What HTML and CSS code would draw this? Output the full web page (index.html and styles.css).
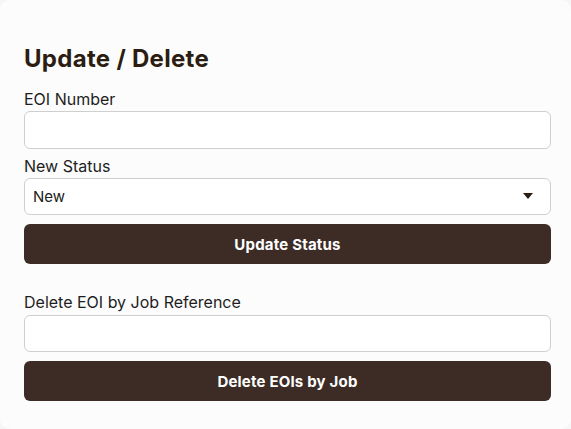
FILE: index.html
```html
<!DOCTYPE html>
<html lang="en">
<head>
<meta charset="utf-8">
<title>Update / Delete</title>
<link rel="stylesheet" href="styles.css">
</head>
<body>
<section class="card">
  <h2 class="title">Update / Delete</h2>
  <form class="form">
    <label class="label" for="eoi">EOI Number</label>
    <input class="field field-tall" id="eoi" type="text">
    <label class="label label-gap" for="status">New Status</label>
    <div class="select-wrap">
      <select class="field select" id="status">
        <option>New</option>
        <option>Current</option>
        <option>Final</option>
      </select>
    </div>
    <button class="btn" type="button">Update Status</button>
  </form>
  <form class="form form-second">
    <label class="label" for="job">Delete EOI by Job Reference</label>
    <input class="field field-second" id="job" type="text">
    <button class="btn" type="button">Delete EOIs by Job</button>
  </form>
</section>
</body>
</html>
```

FILE: styles.css
```css
html, body {
  margin: 0;
  padding: 0;
  background: #f6f6f6;
}

body {
  font-family: "Inter", "Noto Sans", sans-serif;
  color: #1f1f1f;
}

.card {
  background: #fcfcfc;
  border-radius: 10px;
  padding: 45px 20px 27px 24px;
  min-height: 357px;
}

.title {
  margin: 0 0 17px;
  font-size: 24px;
  line-height: 28px;
  font-weight: 700;
  color: #2b1d12;
  letter-spacing: 0.3px;
}

.form {
  display: flex;
  flex-direction: column;
}

.form-second {
  margin-top: 29px;
}

.label {
  font-size: 16px;
  line-height: 18px;
  color: #1e1e1e;
}

.label-gap {
  margin-top: 8px;
}

.field {
  box-sizing: border-box;
  width: 100%;
  margin: 3px 0 0;
  height: 37px;
  border: 1px solid #cfcfcf;
  border-radius: 6px;
  background: #ffffff;
  font-family: inherit;
  font-size: 15px;
  color: #222;
  padding: 0 8px;
  outline: none;
}

.field-tall {
  height: 38px;
}

.field-second {
  margin-top: 4px;
}

.select-wrap {
  position: relative;
  margin-top: 3px;
}

.select {
  margin: 0;
  appearance: none;
  -webkit-appearance: none;
  display: block;
}

.select-wrap::after {
  content: "";
  position: absolute;
  right: 18px;
  top: 15px;
  width: 0;
  height: 0;
  border-left: 5px solid transparent;
  border-right: 5px solid transparent;
  border-top: 6px solid #2b1d12;
  pointer-events: none;
}

.btn {
  margin-top: 9px;
  height: 40px;
  border: none;
  border-radius: 6px;
  background: #3d2c26;
  color: #ffffff;
  font-family: inherit;
  font-size: 15px;
  font-weight: 700;
  letter-spacing: 0.2px;
  cursor: pointer;
}
```
